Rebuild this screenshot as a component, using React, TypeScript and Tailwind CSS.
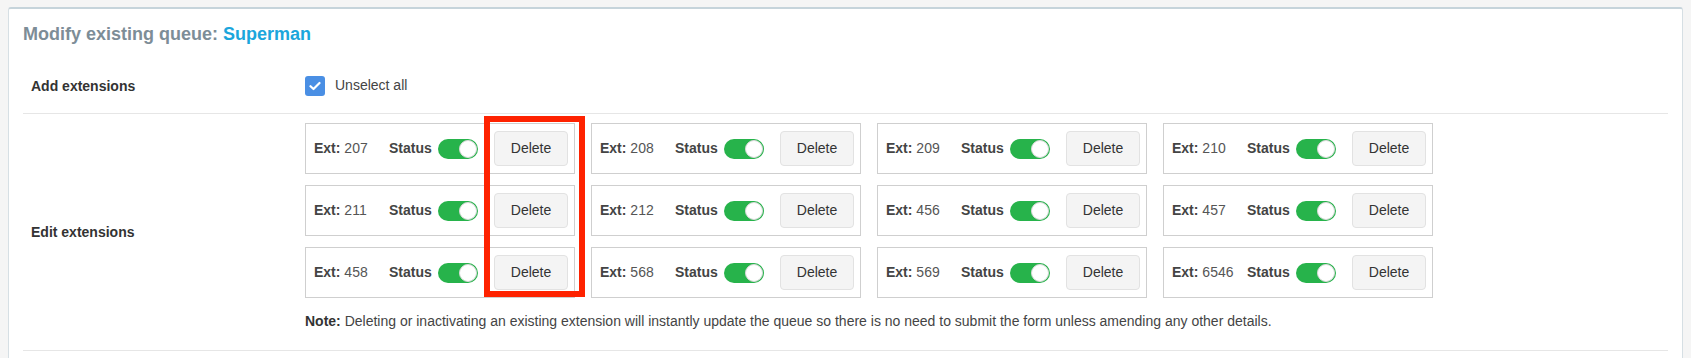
import React from "react";

const rows = [
  ["207", "208", "209", "210"],
  ["211", "212", "456", "457"],
  ["458", "568", "569", "6546"],
];

function Toggle() {
  return (
    <span className="relative inline-flex h-[20px] w-[40px] items-center rounded-full bg-[#27b34b]">
      <span className="absolute right-[1px] h-[18px] w-[18px] rounded-full border border-[#d8d8d8] bg-white" />
    </span>
  );
}

function ExtCard({ ext }: { ext: string }) {
  return (
    <div className="flex h-[51px] w-[270px] items-center border border-[#cfcfcf] bg-white pl-[8px]">
      <span className="w-[75px] text-[#555]">
        <b className="text-[#444]">Ext:</b> {ext}
      </span>
      <span className="w-[49px] font-bold text-[#444]">Status</span>
      <Toggle />
      <button className="ml-[16px] h-[35px] w-[74px] rounded-[4px] border border-[#e2e2e2] bg-[#f4f4f4] text-[#333]">
        Delete
      </button>
    </div>
  );
}

export default function App() {
  return (
    <div className="min-h-[358px] bg-[#f5f5f5] pt-[7px] font-['Liberation_Sans',Arial,sans-serif] text-[14px] text-[#333]">
      <div className="mx-[8px] rounded-t-[3px] border border-t-2 border-[#d6dfe4] border-t-[#c6d4db] bg-white px-[14px] pb-[20px]">
        <h2 className="pt-[12px] text-[18px] font-bold leading-[26px] text-[#7d8d97]">
          Modify existing queue: <span className="text-[#1ba6dc]">Superman</span>
        </h2>

        <div className="mt-[11px] flex h-[56px] items-center border-b border-[#e6e6e6]">
          <div className="w-[282px] pl-[8px] pt-[2px] font-bold text-[#333]">Add extensions</div>
          <label className="flex items-center gap-[10px] text-[#444]">
            <span className="flex h-[20px] w-[20px] items-center justify-center rounded-[3px] bg-[#4a8fe4]">
              <svg width="12" height="10" viewBox="0 0 12 10" fill="none">
                <path d="M1.5 5.2 4.5 8 10.5 2" stroke="white" strokeWidth="2.2" strokeLinecap="round" strokeLinejoin="round" />
              </svg>
            </span>
            Unselect all
          </label>
        </div>

        <div className="flex items-center border-b border-[#e6e6e6] pt-[9px] pb-[19px]">
          <div className="w-[282px] pl-[8px] pt-[10px] font-bold text-[#333]">Edit extensions</div>
          <div className="flex flex-col">
            <div className="relative flex flex-col gap-[11px]">
              {rows.map((r, i) => (
                <div key={i} className="flex gap-[16px]">
                  {r.map((e) => (
                    <ExtCard key={e} ext={e} />
                  ))}
                </div>
              ))}
              <div className="absolute left-[179px] top-[-7px] h-[181px] w-[101px] border-[6px] border-[#fe2200]" />
            </div>
            <p className="mt-[13px] text-[14px] leading-[20px] text-[#444]">
              <b className="text-[#333]">Note:</b> Deleting or inactivating an existing extension will instantly update the queue so there is no need to submit the form unless amending any other details.
            </p>
          </div>
        </div>
      </div>
    </div>
  );
}
